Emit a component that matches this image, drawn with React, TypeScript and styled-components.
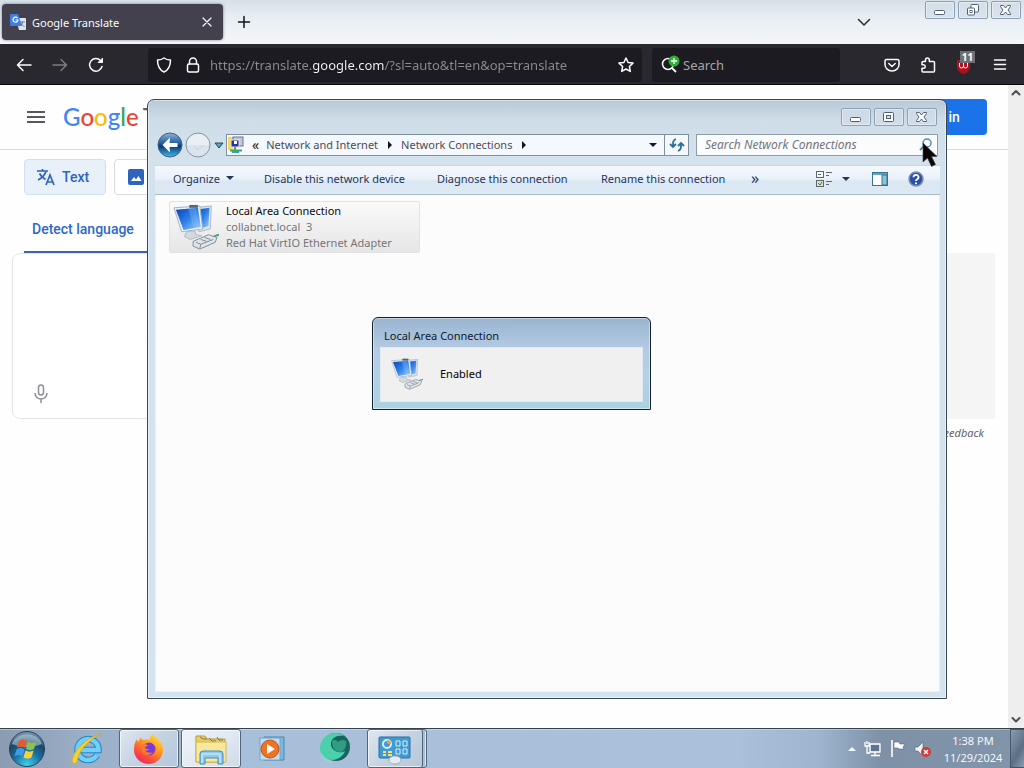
import type { ReactNode } from "react";
import styled, { createGlobalStyle, css } from "styled-components";

const GlobalStyle = createGlobalStyle`
  * {
    box-sizing: border-box;
  }
  body {
    margin: 0;
    font-family: "Noto Sans", "Open Sans", sans-serif;
    font-size: 11px;
    overflow: hidden;
  }
  button, input, textarea {
    font: inherit;
    color: inherit;
    margin: 0;
    padding: 0;
    border: 0;
    background: none;
    outline: 0;
  }
  svg {
    display: block;
    flex: none;
  }
`;

const Desktop = styled.div`
  position: relative;
  height: 100vh;
  display: flex;
  flex-direction: column;
  overflow: hidden;
`;

/* ---------- browser ---------- */

const Browser = styled.main`
  flex: 1;
  min-height: 0;
  display: flex;
  flex-direction: column;
  background: #fefefe;
`;
const TabStrip = styled.header`
  height: 44px;
  display: flex;
  align-items: flex-start;
  padding: 4px 0 0 2px;
  background: linear-gradient(180deg, #d6e0e6 0%, #e6edf2 35%, #f4f7fa 100%);
`;
const Tab = styled.div`
  width: 221px;
  height: 36px;
  display: flex;
  align-items: center;
  gap: 6px;
  padding: 0 8px;
  border-radius: 4px;
  background: #42414d;
  color: #fbfbfe;
  box-shadow: 0 0 3px rgba(40, 40, 60, 0.6);
`;
const TabTitle = styled.span`
  flex: 1;
`;
const IconButton = styled.button<{ $size?: number }>`
  width: ${(p) => p.$size ?? 32}px;
  height: ${(p) => p.$size ?? 32}px;
  flex: none;
  display: flex;
  align-items: center;
  justify-content: center;
`;
const NewTab = styled(IconButton)`
  margin: 2px 0 0 5px;
  color: #15141a;
`;
const AllTabs = styled(IconButton)`
  margin: 2px 45px 0 auto;
  color: #2b2a33;
`;
const WindowControls = styled.div<{ $top?: boolean }>`
  display: flex;
  gap: 3px;
  margin-top: ${(p) => (p.$top ? "-3px" : "0")};
  margin-right: ${(p) => (p.$top ? "3px" : "0")};
`;
const WindowControl = styled.button`
  width: 30px;
  height: 18px;
  display: flex;
  align-items: center;
  justify-content: center;
  border: 1px solid #8d9fb3;
  border-radius: 2px;
  background: rgba(208, 221, 234, 0.7);
  box-shadow: inset 0 0 0 1px rgba(255, 255, 255, 0.4);
`;
const Toolbar = styled.div`
  height: 41px;
  display: flex;
  align-items: center;
  gap: 4px;
  padding: 1px 8px 0;
  background: #29282f;
  border-bottom: 1px solid #08080a;
  color: #fbfbfe;
`;
const NavButtons = styled.div`
  display: flex;
  gap: 4px;
  width: 136px;
`;
const UrlField = styled.label`
  flex: 1;
  height: 34px;
  display: flex;
  align-items: center;
  background: #1c1b21;
  border-radius: 3px;
`;
const UrlInput = styled.input`
  flex: 1;
  min-width: 0;
  height: 30px;
  margin-left: 4px;
  font-size: 13px;
  background: linear-gradient(90deg, #8c8b92 102px, #f4f4f8 102px, #f4f4f8 174px, #8c8b92 174px);
  background-clip: text;
  -webkit-background-clip: text;
  -webkit-text-fill-color: transparent;
`;
const SearchField = styled.label`
  width: 188px;
  height: 34px;
  margin: 0 32px 0 6px;
  display: flex;
  align-items: center;
  gap: 2px;
  padding-left: 9px;
  background: #1c1b21;
  border-radius: 3px;
  input {
    flex: 1;
    min-width: 0;
    font-size: 13px;
  }
  input::placeholder {
    color: #a5a4ac;
    opacity: 1;
  }
`;
const Extensions = styled.div`
  display: flex;
  gap: 4px;
`;

/* ---------- translate page ---------- */

const Viewport = styled.div`
  flex: 1;
  min-height: 0;
  display: flex;
`;
const Page = styled.div`
  flex: 1;
  min-width: 0;
  font-family: Roboto, sans-serif;
`;
const PageHeader = styled.header`
  height: 65px;
  display: flex;
  align-items: center;
  padding: 0 21px 0 24px;
  border-bottom: 1px solid #dadce0;
  color: #5f6368;
`;
const Brand = styled.a`
  display: flex;
  gap: 4px;
  margin-left: 15px;
  font: 500 24px/30px Lato, sans-serif;
  text-decoration: none;
  color: #5f6368;
`;
const Letter = styled.span<{ $color: string }>`
  color: ${(p) => p.$color};
`;
const SignIn = styled.button`
  width: 97px;
  height: 36px;
  margin-left: auto;
  border-radius: 4px;
  background: #1a73e8;
  color: #fff;
  font-size: 14px;
  font-weight: 500;
`;
const Modes = styled.div`
  display: flex;
  gap: 8px;
  padding: 9px 24px 0;
`;
const Mode = styled.button<{ $active?: boolean }>`
  width: ${(p) => (p.$active ? "82px" : "101px")};
  height: 36px;
  display: flex;
  align-items: center;
  gap: 7px;
  padding: 0 12px;
  border: 1px solid ${(p) => (p.$active ? "#d2dff2" : "#dadce0")};
  border-radius: 4px;
  background: ${(p) => (p.$active ? "#e8f0fa" : "#fff")};
  color: #2f64bd;
  font-size: 14px;
  font-weight: 500;
`;
const Languages = styled.div`
  display: flex;
  padding: 8px 24px 0;
`;
const Language = styled.button`
  height: 50px;
  padding: 4px 8px 0;
  border-bottom: 2px solid #3a63b0;
  color: #2a69cc;
  font-size: 14px;
  font-weight: 500;
  flex: 0 0 160px;
  text-align: left;
`;
const Panels = styled.div`
  display: grid;
  grid-template-columns: 1fr 1fr;
  gap: 8px;
  padding: 0 13px 0 12px;
`;
const Panel = styled.div<{ $target?: boolean }>`
  height: 166px;
  display: flex;
  flex-direction: column;
  padding: 8px 8px 4px;
  border: 1px solid ${(p) => (p.$target ? "#f5f5f5" : "#e2e5e9")};
  border-radius: ${(p) => (p.$target ? "0" : "8px")};
  background: ${(p) => (p.$target ? "#f5f5f5" : "#fff")};
  color: #8d9094;
  textarea {
    flex: 1;
    resize: none;
  }
`;
const Feedback = styled.a`
  display: block;
  width: max-content;
  margin: 7px 24px 0 auto;
  font: italic 11px/14px "Noto Sans", sans-serif;
  color: #5f6368;
  text-decoration: none;
`;
const Scrollbar = styled.div`
  width: 16px;
  display: flex;
  flex-direction: column;
  justify-content: space-between;
  background: #eeeeee;
  color: #505050;
`;

/* ---------- explorer window ---------- */

const Window = styled.section`
  position: absolute;
  left: 147px;
  top: 99px;
  width: 800px;
  height: 600px;
  display: flex;
  flex-direction: column;
  padding: 0 6px 6px 7px;
  border: 1px solid #3a4654;
  border-radius: 7px 7px 0 0;
  background: linear-gradient(180deg, #b9c8d5 0, #cfdde8 20px, #d4e2ee 60px, #d3e3ef 100%);
  box-shadow: inset 0 0 0 1px rgba(255, 255, 255, 0.45);
`;
const TitleBar = styled.div`
  height: 34px;
  display: flex;
  justify-content: flex-end;
  padding: 8px 3px 0 0;
`;
const NavRow = styled.div`
  height: 31px;
  display: flex;
  align-items: flex-start;
  padding: 0 2px;
`;
const Travel = styled.div`
  width: 69px;
  height: 22px;
  display: flex;
  align-items: center;
  gap: 2px;
`;
const AddressBar = styled.nav`
  flex: 1;
  height: 22px;
  display: flex;
  align-items: center;
  border: 1px solid #7e909f;
  background: #f5f8fc;
  color: #4c4c54;
`;
const Crumb = styled.button`
  line-height: 20px;
  white-space: nowrap;
`;
const CrumbGlyph = styled.span`
  padding: 0 7px 2px 8px;
  font-size: 14px;
  color: #1a1a1a;
`;
const CrumbArrow = styled.span`
  margin: 0 9px 0 10px;
  border: 4px solid transparent;
  border-left-color: #111;
  border-right-width: 0;
`;
const DownArrow = styled.span`
  border: 4px solid transparent;
  border-top-color: currentColor;
  border-bottom-width: 0;
`;
const AddressDrop = styled.button`
  width: 22px;
  height: 20px;
  margin-left: auto;
  display: flex;
  align-items: center;
  justify-content: center;
  color: #15153a;
`;
const Refresh = styled(AddressDrop)`
  width: 24px;
  margin-left: 0;
  border-left: 1px solid #7e909f;
`;
const WindowSearch = styled.label`
  width: 242px;
  height: 22px;
  margin-left: 7px;
  display: flex;
  align-items: center;
  padding: 0 4px 0 8px;
  border: 1px solid #8c9dac;
  background: #fafcfd;
  input {
    flex: 1;
    min-width: 0;
    height: 20px;
    padding-bottom: 2px;
    font-size: 12px;
    font-style: italic;
  }
  input::placeholder {
    color: #74747a;
    opacity: 1;
  }
`;
const CommandBar = styled.div`
  height: 30px;
  display: flex;
  align-items: center;
  padding: 0 15px 2px 18px;
  background: linear-gradient(180deg, #f5f9fd 0%, #e9f1fa 45%, #dbe7f3 55%, #dce8f4 100%);
  border-top: 1px solid #c9d6e3;
  border-bottom: 1px solid #a9bccd;
  color: #24365a;
`;
const Command = styled.button<{ $width: number }>`
  width: ${(p) => p.$width}px;
  display: flex;
  align-items: center;
  gap: 6px;
  padding-bottom: 2px;
  white-space: nowrap;
`;
const MoreCommands = styled(Command)`
  font-size: 16px;
`;
const CommandTools = styled.div`
  display: flex;
  align-items: center;
  margin-left: auto;
`;
const ToolButton = styled(IconButton)<{ $gap?: number }>`
  margin-left: ${(p) => p.$gap ?? 0}px;
`;
const FileArea = styled.div`
  flex: 1;
  padding: 6px 13px;
  background: #fcfcfc;
  border: 1px solid #e6f2fa;
  border-top: 0;
`;
const Connection = styled.button`
  width: 251px;
  height: 52px;
  display: flex;
  align-items: center;
  gap: 7px;
  padding: 0 4px 0 3px;
  border: 1px solid #e2e2e2;
  border-radius: 2px;
  background: linear-gradient(180deg, #fafafa, #e6e6e6);
  text-align: left;
  line-height: 16px;
  color: #75757a;
  white-space: nowrap;
`;
const ConnectionName = styled.div`
  color: #0c0c0c;
`;

const Dialog = styled.section`
  position: absolute;
  left: 372px;
  top: 317px;
  width: 279px;
  height: 93px;
  display: flex;
  flex-direction: column;
  padding: 0 7px 7px;
  border: 1px solid #10202e;
  border-radius: 6px 6px 0 0;
  background: linear-gradient(180deg, #9ab4d0 0, #b4cbe3 32px, #b5cfe5 60%, #abd2e0 100%);
  box-shadow: inset 0 0 0 1px rgba(255, 255, 255, 0.45);
`;
const DialogTitle = styled.h2`
  height: 29px;
  margin: 0;
  padding: 10px 0 0 4px;
  font-size: 11px;
  line-height: 16px;
  font-weight: 400;
  color: #0b1a30;
`;
const DialogBody = styled.div`
  flex: 1;
  display: flex;
  align-items: center;
  gap: 17px;
  padding: 0 10px 2px;
  background: #f0f0f0;
  border: 1px solid #dfeaf3;
  color: #000;
`;
const Pointer = styled.svg`
  position: absolute;
  left: 922px;
  top: 142px;
`;

/* ---------- taskbar ---------- */

const Taskbar = styled.footer`
  height: 40px;
  display: flex;
  align-items: stretch;
  gap: 2px;
  border-top: 1px solid #34424f;
  background: linear-gradient(
    90deg,
    #8b9bb1 0,
    #9cb0c8 90px,
    #a7bfd9 240px,
    #a9c1da 72%,
    #9db5cf 80%,
    #7e91a6 86%,
    #8194a9 100%
  );
  box-shadow: inset 0 1px 0 rgba(255, 255, 255, 0.35);
`;
const slot = css`
  display: flex;
  align-items: center;
  justify-content: center;
`;
const StartButton = styled.button`
  width: 55px;
  ${slot}
  padding-right: 2px;
`;
const Task = styled.button<{ $open?: boolean; $active?: boolean; $stacked?: boolean }>`
  width: 60px;
  ${slot}
  ${(p) =>
    p.$open &&
    css`
      border: 1px solid #52657b;
      border-radius: 3px;
      background: linear-gradient(135deg, #dfe7f0 0%, #c4d2e2 50%, #b5c7db 100%);
      box-shadow: inset 0 0 0 1px rgba(255, 255, 255, 0.65);
    `}
  ${(p) =>
    p.$active &&
    css`
      background: linear-gradient(135deg, #eff3f8 0%, #dfe7f1 60%, #cfdae8 100%);
    `}
  ${(p) =>
    p.$stacked &&
    css`
      padding-right: 4px;
      box-shadow:
        inset -1px 0 0 rgba(255, 255, 255, 0.65),
        inset -3px 0 0 #a9bdd3,
        inset -4px 0 0 #52657b,
        inset 0 0 0 1px rgba(255, 255, 255, 0.65);
    `}
`;
const Tray = styled.div`
  margin-left: auto;
  display: flex;
  align-items: center;
  gap: 8px;
`;
const TrayButton = styled.button`
  height: 20px;
  ${slot}
`;
const Clock = styled.time`
  width: 66px;
  margin-right: 2px;
  text-align: center;
  line-height: 17px;
  color: #f4f8fc;
`;
const ShowDesktop = styled.button`
  width: 14px;
  border: 1px solid #44566a;
  border-right: 0;
  background: linear-gradient(120deg, #8b9db0, #5b6f83 60%, #8b9db0);
`;

/* ---------- icons ---------- */

interface LineIconProps {
  size?: number;
  width?: number;
  children: ReactNode;
}
function LineIcon({ size = 16, width = 1.5, children }: LineIconProps) {
  return (
    <svg
      width={size}
      height={size}
      viewBox="0 0 16 16"
      fill="none"
      stroke="currentColor"
      strokeWidth={width}
      strokeLinecap="round"
      strokeLinejoin="round"
    >
      {children}
    </svg>
  );
}

function TranslateFavicon() {
  return (
    <svg width="16" height="16" viewBox="0 0 16 16">
      <path d="M6 4h9a1 1 0 0 1 1 1v10a1 1 0 0 1-1 1H9z" fill="#dfe3ea" />
      <path d="M10 8h5M12.500 7v1c0 2-1.500 3.500-2.500 4M11 9c.5 1.500 2 3 3.500 3.500" stroke="#77808f" fill="none" />
      <path d="M1 0h7l4 12H1a1 1 0 0 1-1-1V1a1 1 0 0 1 1-1z" fill="#3f7fe4" />
      <path d="M7.500 4.200A2.500 2.500 0 1 0 8 6H5.500" stroke="#fff" strokeWidth="1.200" fill="none" />
    </svg>
  );
}

function ControlIcon({ kind }: { kind: "min" | "max" | "restore" | "close" }) {
  return (
    <svg width="14" height="12" viewBox="0 0 14 12" fill="#fff" stroke="#4f6076">
      {kind === "min" && <rect x="1.500" y="6.500" width="10" height="4" rx="1" />}
      {kind === "max" && (
        <>
          <rect x="1.500" y="1.500" width="10" height="9" rx="1" />
          <rect x="4.500" y="4.500" width="4" height="3" fill="#d6e2ec" />
        </>
      )}
      {kind === "restore" && (
        <>
          <rect x="5" y=".5" width="7.500" height="7.500" rx="1" />
          <rect x="1.500" y="4" width="7" height="7" rx="1" />
          <rect x="4" y="6.500" width="2" height="2" />
        </>
      )}
      {kind === "close" && (
        <path d="M1.500 1.500h3L6.500 4l2-2.500h3v1L9 6l2.500 3.500v1h-3l-2-2.500-2 2.500h-3v-1L4 6 1.500 2.500z" />
      )}
    </svg>
  );
}

function NetworkIcon({ size }: { size: number }) {
  return (
    <svg width={size} height={size} viewBox="0 0 48 48">
      <defs>
        <linearGradient id="screen" x1="0" y1="0" x2="1" y2="1">
          <stop offset="0" stopColor="#0b3fb5" />
          <stop offset=".5" stopColor="#2f7fe8" />
          <stop offset="1" stopColor="#9fd2fb" />
        </linearGradient>
      </defs>
      <path d="M20 4l20-2-1 24-12 3z" fill="#d9e3ec" stroke="#a9b8c6" />
      <path d="M24 6l14-2-1 19-10 3z" fill="url(#screen)" />
      <path d="M1 4l27-2 3 24-22 3z" fill="#eef3f7" stroke="#9fb0c0" />
      <path d="M3 6l23-2 3 20-18 3z" fill="url(#screen)" />
      <path d="M16 5l8-1 3 19-6 1z" fill="#8cc6fa" opacity=".3" />
      <path d="M14 29l9-1 1 4 6 1-12 4-6-3z" fill="#d4d9df" stroke="#b3bac3" />
      <path d="M17 1h9v3h-9z" fill="#55657a" />
      <path d="M38 36c3 0 4-3 10-4" stroke="#3ea287" strokeWidth="2" fill="none" />
      <path d="M21 39l16-7 9 3-2 5-16 7-7-3z" fill="#dfe4e8" stroke="#7e8b97" />
      <path d="M24 40l5 2-1 4M29 42l13-5M29 37l6 2M33 35l6 2" stroke="#7e8b97" fill="none" />
    </svg>
  );
}

function BackIcon() {
  return (
    <svg width="26" height="26" viewBox="0 0 26 26">
      <defs>
        <linearGradient id="back" x1="0" y1="0" x2="0" y2="1">
          <stop offset="0" stopColor="#8fb1d4" />
          <stop offset=".45" stopColor="#1f5a9c" />
          <stop offset=".55" stopColor="#073a78" />
          <stop offset="1" stopColor="#43b8ee" />
        </linearGradient>
      </defs>
      <circle cx="13" cy="13" r="12" fill="url(#back)" stroke="#44617f" />
      <path d="M13 5.500L5.500 13l7.500 7.500-.5-5.500h8v-4h-8z" fill="#fff" />
    </svg>
  );
}

function ForwardIcon() {
  return (
    <svg width="26" height="26" viewBox="0 0 26 26">
      <circle cx="13" cy="13" r="12" fill="#dbe4ec" stroke="#8696a6" />
      <path d="M2 13a11 11 0 0 1 22 0z" fill="#e9eff4" />
      <path d="M9 14l4 4 6-5" stroke="#c9d4dd" fill="none" />
    </svg>
  );
}

function FolderNetIcon() {
  return (
    <svg width="17" height="18" viewBox="0 0 17 18">
      <path d="M1 1h5v13H1z" fill="#f2d95c" />
      <rect x="6" y="1" width="10" height="9" fill="#c3cad6" stroke="#6d7788" />
      <rect x="4" y="4" width="8" height="7" fill="#2433a8" stroke="#dfe5f0" />
      <path d="M7 5h3v3H7z" fill="#fff" />
      <path d="M3 14.500h12M8 11v6" stroke="#3fa85b" strokeWidth="2" />
      <path d="M5 16h7" stroke="#3a9bc8" strokeWidth="2" />
    </svg>
  );
}

function StartOrb() {
  return (
    <svg width="38" height="38" viewBox="0 0 38 38">
      <defs>
        <radialGradient id="orb" cx=".5" cy=".95" r=".9">
          <stop offset="0" stopColor="#3fd0f2" />
          <stop offset=".45" stopColor="#19709f" />
          <stop offset=".75" stopColor="#1b4566" />
          <stop offset="1" stopColor="#6f93ac" />
        </radialGradient>
      </defs>
      <circle cx="19" cy="19" r="17.500" fill="url(#orb)" stroke="#2b4257" />
      <path d="M4 14a15.500 13 0 0 1 30 0c-9 4-21 4-30 0z" fill="#e4eff5" opacity=".45" />
      <path d="M11 11c3-2 5-2 8 0l-2 7c-3-2-5-2-8 0z" fill="#e8592c" />
      <path d="M20 12c3 1.500 5 1.500 8 0l-2 7c-3 1.500-5 1.500-8 0z" fill="#8cc34a" />
      <path d="M8.500 19.500c3-2 5-2 8 0l-2 7c-3-2-5-2-8 0z" fill="#3f9ce0" />
      <path d="M17.500 20.500c3 1.500 5 1.500 8 0l-2 7c-3 1.500-5 1.500-8 0z" fill="#fbd03f" />
    </svg>
  );
}

function ExplorerE() {
  return (
    <svg width="34" height="34" viewBox="0 0 34 34">
      <path
        d="M27 23a10.500 10.500 0 1 1 1.500-5H11"
        fill="none"
        stroke="#2583c9"
        strokeWidth="6.500"
      />
      <path
        d="M27 23a10.500 10.500 0 1 1 1.500-5H11"
        fill="none"
        stroke="#6fd0f8"
        strokeWidth="4.500"
      />
      <path d="M3 31C-1 26 12 6 31 2c-9 4-22 14-24 28-1 2-3 2-4 1z" fill="#f3d132" stroke="#cfa51f" strokeWidth=".6" />
    </svg>
  );
}

function FirefoxIcon() {
  return (
    <svg width="32" height="32" viewBox="0 0 32 32">
      <defs>
        <linearGradient id="fox" x1=".85" y1="0" x2=".2" y2="1">
          <stop offset="0" stopColor="#ffe24a" />
          <stop offset=".4" stopColor="#ff9a1f" />
          <stop offset=".75" stopColor="#fb4a3e" />
          <stop offset="1" stopColor="#e8246f" />
        </linearGradient>
      </defs>
      <path
        d="M4 6c0 2 1 3 1 3l3-5c0 2 1 3 3 3 3-1 5 0 6 0-1-2 1-5 3-6 0 3 9 5 10 14 1 9-6 16-14 16S1 25 1 17c0-5 1-8 3-11z"
        fill="url(#fox)"
      />
      <circle cx="16" cy="16" r="6.500" fill="#7a3ad6" />
      <path d="M9 12c2-2 5-1 6 1-2 0-3 1-3 2 1 1 2 1 4 1-1 2-3 2-4 1 1 2 4 4 8 2-2 3-6 4-9 2-2-2-3-6-2-9z" fill="#ff7a28" />
    </svg>
  );
}

function FolderIcon() {
  return (
    <svg width="34" height="34" viewBox="0 0 34 34">
      <path d="M2 4h9l2 3h18v23H2z" fill="#e9cf6a" stroke="#b79a3a" />
      <path d="M6 5l3 2h4M15 6l3 3h4M23 5l2 3h4" stroke="#8a7136" fill="none" />
      <path d="M2 10h30v20H2z" fill="#f9e89b" stroke="#d2b652" />
      <path d="M6 32V22q0-3 3-3h17q3 0 3 3v10h-5v-6H11v6z" fill="#8ccbec" stroke="#3f8fbc" />
      <path d="M8 31V22h18v9" fill="none" stroke="#dff2fb" />
    </svg>
  );
}

function MediaIcon() {
  return (
    <svg width="28" height="26" viewBox="0 0 28 26">
      <path d="M5 1h20v23H5z" fill="#7fb8dc" stroke="#4a86b0" />
      <path d="M1 2h20v22H1z" fill="#bfe0f2" stroke="#6ea6cb" />
      <circle cx="11" cy="13" r="9" fill="#ee7423" stroke="#c9520f" />
      <path d="M8 8l8 5-8 5z" fill="#fff" />
    </svg>
  );
}

function SphereIcon() {
  return (
    <svg width="34" height="34" viewBox="0 0 34 34">
      <circle cx="18" cy="15" r="14" fill="#18655f" />
      <path d="M2 18C1 8 9 1 18 1c3 0 6 1 8 3-5-1-10 0-12 4-2 3-1 7 1 9 3 4 9 4 12 2-2 6-10 11-17 8-4-1-7-4-8-9z" fill="#4bd0ab" />
      <path d="M14 9c3-2 5-1 6 1 2-2 5-3 8-1 1 5-1 9-5 11-5 0-9-3-9-11z" fill="#2f9d84" />
      <path d="M3 20c2 6 8 9 14 12-5-2-13-3-14-12z" fill="#8fe0cb" />
    </svg>
  );
}

function ControlPanelIcon() {
  return (
    <svg width="34" height="32" viewBox="0 0 34 32">
      <rect x="1" y="4" width="31" height="21" rx="1" fill="#3f9bd2" stroke="#2b6f9f" />
      <circle cx="9" cy="11" r="4" fill="none" stroke="#d8eefa" strokeWidth="2" />
      <path d="M9 11V7a4 4 0 0 1 4 4z" fill="#f29a3a" />
      <path d="M5 19h3M10 19h4M5 22h3M10 22h4" stroke="#fbe07a" strokeWidth="2" />
      <path d="M18 8h4v5h-4zM25 8h4v5h-4zM18 16h4v5h-4zM25 16h4v5h-4z" fill="none" stroke="#d8eefa" />
      <ellipse cx="17" cy="27" rx="6" ry="4" fill="#e6ebef" stroke="#a2b0bb" />
    </svg>
  );
}

/* ---------- parts ---------- */

function BrowserChrome() {
  return (
    <>
      <TabStrip>
        <Tab>
          <TranslateFavicon />
          <TabTitle>Google Translate</TabTitle>
          <IconButton $size={16} aria-label="Close tab">
            <LineIcon size={16} width={1.2}>
              <path d="M4 4l8 8M12 4l-8 8" />
            </LineIcon>
          </IconButton>
        </Tab>
        <NewTab aria-label="New tab">
          <LineIcon>
            <path d="M8 2.500v11M2.500 8h11" />
          </LineIcon>
        </NewTab>
        <AllTabs aria-label="List all tabs">
          <LineIcon>
            <path d="M2.500 5.500L8 11l5.500-5.500" />
          </LineIcon>
        </AllTabs>
        <WindowControls $top>
          <WindowControl aria-label="Minimize browser"><ControlIcon kind="min" /></WindowControl>
          <WindowControl aria-label="Restore browser"><ControlIcon kind="restore" /></WindowControl>
          <WindowControl aria-label="Close browser"><ControlIcon kind="close" /></WindowControl>
        </WindowControls>
      </TabStrip>
      <Toolbar>
        <NavButtons>
          <IconButton aria-label="Back">
            <LineIcon>
              <path d="M15 8H1.500M7 2.500L1.500 8 7 13.500" />
            </LineIcon>
          </IconButton>
          <IconButton aria-label="Forward" disabled>
            <LineIcon>
              <path d="M1 8h13.500M9 2.500L14.500 8 9 13.500" opacity=".4" />
            </LineIcon>
          </IconButton>
          <IconButton aria-label="Reload">
            <LineIcon>
              <path d="M14 9.500A6.300 6.300 0 1 1 12.500 3.500L14 5" />
              <path d="M14.500 1.500v4h-4z" fill="currentColor" strokeWidth="1" />
            </LineIcon>
          </IconButton>
        </NavButtons>
        <UrlField>
          <IconButton aria-label="Tracking protection">
            <LineIcon>
              <path d="M8 1C6 2.500 4 3 1.500 3c0 6 2 10 6.500 12 4.500-2 6.500-6 6.500-12C12 3 10 2.500 8 1z" />
            </LineIcon>
          </IconButton>
          <IconButton $size={26} aria-label="Site information">
            <LineIcon>
              <rect x="2.500" y="7" width="11" height="8" rx="1.500" />
              <path d="M4.500 7V4.500a3.500 3.500 0 0 1 7 0V7" />
            </LineIcon>
          </IconButton>
          <UrlInput
            aria-label="Address"
            defaultValue="https://translate.google.com/?sl=auto&tl=en&op=translate"
          />
          <IconButton aria-label="Bookmark this page">
            <LineIcon>
              <path d="M8 1l2.100 4.500 4.900.6-3.600 3.400.9 4.900L8 12l-4.300 2.400.9-4.900L1 6.100l4.900-.6z" />
            </LineIcon>
          </IconButton>
        </UrlField>
        <SearchField>
          <svg width="20" height="20" viewBox="0 0 20 20">
            <circle cx="7" cy="9" r="5.500" fill="none" stroke="#fbfbfe" strokeWidth="1.500" />
            <path d="M11 13l4 4" stroke="#fbfbfe" strokeWidth="1.800" />
            <circle cx="13" cy="6" r="5.500" fill="#2fae34" />
            <path d="M13 3v6M10 6h6" stroke="#fff" strokeWidth="1.300" />
          </svg>
          <input aria-label="Search" placeholder="Search" />
        </SearchField>
        <Extensions>
          <IconButton aria-label="Save to Pocket">
            <LineIcon>
              <path d="M2.500 2.500h11q1.500 0 1.500 1.500v3.500a7 6.500 0 0 1-14 0V4q0-1.500 1.500-1.500z" />
              <path d="M4.800 6.500L8 9.500l3.200-3" />
            </LineIcon>
          </IconButton>
          <IconButton aria-label="Extensions">
            <LineIcon>
              <path d="M5.500 4.500V3a1.900 1.900 0 0 1 3.800 0v1.500h4.200q1 0 1 1V14q0 1-1 1H3q-1 0-1-1v-2.700h1.500a1.700 1.700 0 0 0 0-3.500H2V5.500q0-1 1-1z" />
            </LineIcon>
          </IconButton>
          <IconButton aria-label="uBlock Origin, 11 blocked">
            <svg width="26" height="30" viewBox="0 0 26 30">
              <path d="M6 10h13v8q-1 4-6.500 6Q7 22 6 18z" fill="#b0101c" />
              <path d="M8.500 13v3q0 2 2 2t2-2v-3M12.500 16q0 2 2 2t2-2v-3" stroke="#fff" fill="none" />
              <rect x="9" y="1" width="15" height="12" fill="#6f7071" />
              <text x="16.500" y="11" textAnchor="middle" fontSize="10" fontWeight="700" fill="#fff">11</text>
            </svg>
          </IconButton>
          <IconButton aria-label="Open application menu">
            <LineIcon>
              <path d="M2.500 3h11M2.500 7.500h11M2.500 12h11" />
            </LineIcon>
          </IconButton>
        </Extensions>
      </Toolbar>
    </>
  );
}

const googleLetters = [
  ["G", "#4285f4"],
  ["o", "#ea4335"],
  ["o", "#fbbc05"],
  ["g", "#4285f4"],
  ["l", "#34a853"],
  ["e", "#ea4335"],
];

function TranslatePage() {
  return (
    <Viewport>
      <Page>
        <PageHeader>
          <IconButton $size={24} aria-label="Main menu">
            <svg width="20" height="14" viewBox="0 0 20 14" stroke="#55585c" strokeWidth="2">
              <path d="M1 2h18M1 7h18M1 12h18" />
            </svg>
          </IconButton>
          <Brand href="#">
            <span>
              {googleLetters.map(([letter, color], i) => (
                <Letter key={i} $color={color}>{letter}</Letter>
              ))}
            </span>
            <span>Translate</span>
          </Brand>
          <SignIn>Sign in</SignIn>
        </PageHeader>
        <Modes>
          <Mode $active>
            <svg width="18" height="18" viewBox="0 0 18 18" fill="none" stroke="currentColor" strokeWidth="1.700">
              <path d="M0 3h11M5.500 1v2M9 3c-1 4-4 7-8 9M2.500 5.500c1.500 3 3.500 4.500 6 6" />
              <path d="M9 17l4-10 4 10M10.500 14h5" />
            </svg>
            Text
          </Mode>
          <Mode aria-label="Images">
            <svg width="18" height="18" viewBox="0 0 18 18">
              <rect x="1" y="1" width="16" height="16" rx="2" fill="currentColor" />
              <path d="M4 13l3-4 2 2.500L11.500 8l3 5z" fill="#fff" />
            </svg>
          </Mode>
        </Modes>
        <Languages>
          <Language>Detect language</Language>
        </Languages>
        <Panels>
          <Panel>
            <textarea aria-label="Source text" />
            <IconButton $size={40} aria-label="Translate by voice">
              <svg width="16" height="20" viewBox="0 0 16 20" fill="none" stroke="currentColor" strokeWidth="1.500">
                <rect x="5.500" y="1" width="5" height="10" rx="2.500" />
                <path d="M2 9a6 6 0 0 0 12 0M8 15v4" />
              </svg>
            </IconButton>
          </Panel>
          <Panel $target />
        </Panels>
        <Feedback href="#">Send feedback</Feedback>
      </Page>
      <Scrollbar>
        <LineIcon width={2}>
          <path d="M4.500 9.500L8 6l3.500 3.500" />
        </LineIcon>
        <LineIcon width={2}>
          <path d="M4.500 6L8 9.500 11.500 6" />
        </LineIcon>
      </Scrollbar>
    </Viewport>
  );
}

function NetworkConnections() {
  return (
    <Window aria-label="Network Connections">
      <TitleBar>
        <WindowControls>
          <WindowControl aria-label="Minimize"><ControlIcon kind="min" /></WindowControl>
          <WindowControl aria-label="Maximize"><ControlIcon kind="max" /></WindowControl>
          <WindowControl aria-label="Close"><ControlIcon kind="close" /></WindowControl>
        </WindowControls>
      </TitleBar>
      <NavRow>
        <Travel>
          <IconButton $size={26} aria-label="Go back"><BackIcon /></IconButton>
          <IconButton $size={26} aria-label="Go forward"><ForwardIcon /></IconButton>
          <IconButton $size={12} aria-label="Recent pages">
            <svg width="10" height="7" viewBox="0 0 10 7">
              <path d="M1 1h8L5 6z" fill="#58a5b5" stroke="#1d4c63" />
            </svg>
          </IconButton>
        </Travel>
        <AddressBar aria-label="Location">
          <FolderNetIcon />
          <CrumbGlyph>«</CrumbGlyph>
          <Crumb>Network and Internet</Crumb>
          <CrumbArrow />
          <Crumb>Network Connections</Crumb>
          <CrumbArrow />
          <AddressDrop aria-label="Previous locations"><DownArrow /></AddressDrop>
          <Refresh aria-label="Refresh">
            <svg width="16" height="14" viewBox="0 0 16 14" fill="none" stroke="#2b6f9a" strokeWidth="1.800">
              <path d="M7 1C4 2 4 4 4 8M1 6l3 3 3-3" />
              <path d="M9 13c3-1 3-3 3-7M9 8l3-3 3 3" />
            </svg>
          </Refresh>
        </AddressBar>
        <WindowSearch>
          <input aria-label="Search Network Connections" placeholder="Search Network Connections" />
          <svg width="14" height="14" viewBox="0 0 14 14" fill="none" stroke="#5d87ad">
            <circle cx="8" cy="5" r="4" strokeWidth="1.500" />
            <path d="M5 8l-4 4" strokeWidth="2" />
          </svg>
        </WindowSearch>
      </NavRow>
      <CommandBar>
        <Command $width={91}>Organize <DownArrow /></Command>
        <Command $width={173}>Disable this network device</Command>
        <Command $width={164}>Diagnose this connection</Command>
        <Command $width={150}>Rename this connection</Command>
        <MoreCommands $width={20} aria-label="More commands">»</MoreCommands>
        <CommandTools>
          <ToolButton $size={18} aria-label="Change view">
            <svg width="18" height="18" viewBox="0 0 18 18" fill="none" stroke="#5c6874">
              <rect x="1.500" y="1.500" width="7" height="6" fill="#f7f9f2" />
              <rect x="1.500" y="10.500" width="7" height="6" fill="#d9e3b9" />
              <path d="M3 4.500h3M3 13l2 2 2-3M11 2.500h6M11 5.500h3M11 11.500h6M11 14.500h3" />
            </svg>
          </ToolButton>
          <ToolButton $size={18} $gap={4} aria-label="More view options"><DownArrow /></ToolButton>
          <ToolButton $size={18} $gap={16} aria-label="Show the preview pane">
            <svg width="16" height="14" viewBox="0 0 16 14">
              <rect x=".5" y=".5" width="15" height="13" fill="#fdfefe" stroke="#3c7389" />
              <path d="M1 2h14" stroke="#62a5bc" strokeWidth="2" />
              <rect x="10" y="3" width="5" height="10" fill="#8cc5d3" stroke="#3c7389" />
            </svg>
          </ToolButton>
          <ToolButton $size={18} $gap={18} aria-label="Help">
            <svg width="16" height="16" viewBox="0 0 16 16">
              <circle cx="8" cy="8" r="7" fill="#2c4fa8" stroke="#8191b0" strokeWidth="1.500" />
              <path d="M5.500 6.200a2.500 2.300 0 1 1 3.700 2Q8 8.800 8 10" stroke="#fff" strokeWidth="1.800" fill="none" />
              <circle cx="8" cy="12.300" r="1.100" fill="#fff" />
            </svg>
          </ToolButton>
        </CommandTools>
      </CommandBar>
      <FileArea>
        <Connection>
          <NetworkIcon size={46} />
          <div>
            <ConnectionName>Local Area Connection</ConnectionName>
            <div>collabnet.local&nbsp; 3</div>
            <div>Red Hat VirtIO Ethernet Adapter</div>
          </div>
        </Connection>
      </FileArea>
    </Window>
  );
}

function StatusDialog() {
  return (
    <Dialog role="dialog" aria-labelledby="status-title">
      <DialogTitle id="status-title">Local Area Connection</DialogTitle>
      <DialogBody>
        <NetworkIcon size={32} />
        Enabled
      </DialogBody>
    </Dialog>
  );
}

function SystemTaskbar() {
  return (
    <Taskbar>
      <StartButton aria-label="Start"><StartOrb /></StartButton>
      <Task aria-label="Internet Explorer"><ExplorerE /></Task>
      <Task $open aria-label="Firefox"><FirefoxIcon /></Task>
      <Task $open $active aria-label="Windows Explorer"><FolderIcon /></Task>
      <Task aria-label="Media Player"><MediaIcon /></Task>
      <Task aria-label="Web app"><SphereIcon /></Task>
      <Task $open $stacked aria-label="Control Panel"><ControlPanelIcon /></Task>
      <Tray>
        <TrayButton aria-label="Show hidden icons">
          <svg width="8" height="5" viewBox="0 0 8 5"><path d="M0 5l4-4 4 4z" fill="#f4f8fc" /></svg>
        </TrayButton>
        <TrayButton aria-label="Network">
          <svg width="18" height="16" viewBox="0 0 18 16" fill="none" stroke="#fff" strokeWidth="1.300">
            <path d="M6 3h10v8H6zM11 11v3M7 14.500h9M1 1v4h4V1M3 5v7h3M3 0v3" />
            <path d="M7 4h8v6H7z" fill="#60758c" stroke="none" />
          </svg>
        </TrayButton>
        <TrayButton aria-label="Action Center">
          <svg width="16" height="17" viewBox="0 0 16 17">
            <path d="M2 0v17" stroke="#fff" strokeWidth="1.600" />
            <path d="M4 2h5l1 2h5l-2 3 1 2H9L8 8H4z" fill="#fff" stroke="#52657a" strokeWidth=".6" />
          </svg>
        </TrayButton>
        <TrayButton aria-label="Volume muted">
          <svg width="18" height="18" viewBox="0 0 18 18">
            <path d="M1 7h3l5-5v14l-5-5H1z" fill="#eef3f7" stroke="#52657a" strokeWidth=".6" />
            <circle cx="12" cy="12" r="5" fill="#d43a34" />
            <path d="M10 10l4 4M14 10l-4 4" stroke="#fff" strokeWidth="1.500" />
          </svg>
        </TrayButton>
        <Clock dateTime="2024-11-29T13:38">
          1:38 PM
          <br />
          11/29/2024
        </Clock>
      </Tray>
      <ShowDesktop aria-label="Show desktop" />
    </Taskbar>
  );
}

function App() {
  return (
    <>
      <GlobalStyle />
      <Desktop>
        <Browser>
          <BrowserChrome />
          <TranslatePage />
        </Browser>
        <SystemTaskbar />
        <NetworkConnections />
        <StatusDialog />
        <Pointer width="17" height="26" viewBox="0 0 17 26">
          <path d="M1 1v19l4.500-4 4 8.500 4-2-4-8H15z" fill="#0a0606" stroke="#3c3c3c" strokeWidth=".6" />
        </Pointer>
      </Desktop>
    </>
  );
}

export default App;
